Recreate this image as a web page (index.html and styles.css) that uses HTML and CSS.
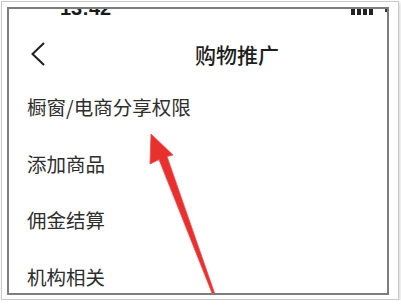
FILE: index.html
```html
<!DOCTYPE html>
<html lang="zh">
<head>
<meta charset="utf-8">
<title>购物推广</title>
<link rel="stylesheet" href="styles.css">
</head>
<body>
<div class="frame">
  <div class="screen">
    <div class="status">
      <span class="time">13:42</span>
      <span class="signal"><i></i><i></i><i></i><i></i></span>
      <span class="batt"></span>
    </div>
    <div class="nav">
      <svg class="back" width="16" height="26" viewBox="0 0 16 26"><polyline points="14,2 2.5,13 14,24" fill="none" stroke="#1e1e1e" stroke-width="2" stroke-linejoin="miter"/></svg>
      <span class="title">购物推广</span>
    </div>
    <ul class="list">
      <li>橱窗/电商分享权限</li>
      <li>添加商品</li>
      <li>佣金结算</li>
      <li>机构相关</li>
    </ul>
    <svg class="arrow" width="378" height="284" viewBox="0 0 378 284"><polygon points="142,125 164,146 158,147.4 205.5,284 203,284 150,150.6 141,155" fill="#e8302f" stroke="#ef4a45" stroke-width="0.8" stroke-linejoin="round"/></svg>
  </div>
</div>
</body>
</html>
```
FILE: styles.css
```css
html, body {
  margin: 0;
  padding: 0;
  background: #ffffff;
}
body {
  font-family: "Noto Sans CJK SC", "Noto Sans", sans-serif;
}
.frame {
  margin: 1px 0 0 1px;
  width: 383px;
  height: 288px;
  padding: 5px 8px 4px 5px;
  border: 1px solid #c9c9c9;
  background: #ffffff;
  box-shadow: 1px 2px 3px rgba(0,0,0,0.18);
}
.screen {
  position: relative;
  box-sizing: border-box;
  width: 382px;
  height: 288px;
  border: 2px solid #7d7d7d;
  overflow: hidden;
  background: #ffffff;
}
.status {
  display: flex;
  align-items: flex-end;
  height: 9px;
  overflow: hidden;
}
.time {
  font-family: "Liberation Sans", Arial, sans-serif;
  font-weight: bold;
  font-size: 20px;
  line-height: 20px;
  color: #1a1a1a;
  margin-left: 51px;
}
.signal {
  display: flex;
  gap: 2px;
  margin-left: 240px;
  margin-bottom: 3px;
}
.signal i {
  display: block;
  width: 4px;
  height: 6px;
  background: #222222;
}
.batt {
  align-self: flex-start;
  width: 2px;
  height: 3px;
  margin-left: auto;
  background: #333333;
}
.nav {
  display: flex;
  align-items: center;
  height: 50px;
  margin-top: 11px;
}
.back {
  margin-left: 21px;
}
.title {
  margin-left: 149px;
  font-size: 21px;
  font-weight: 500;
  line-height: 26px;
  color: #1e1e1e;
}
.list {
  list-style: none;
  margin: 0;
  padding: 0;
}
.list li {
  height: 56.7px;
  line-height: 55px;
  padding-left: 18px;
  font-size: 19.5px;
  color: #2e2e2e;
}
.arrow {
  position: absolute;
  left: 0;
  top: 0;
}
```
